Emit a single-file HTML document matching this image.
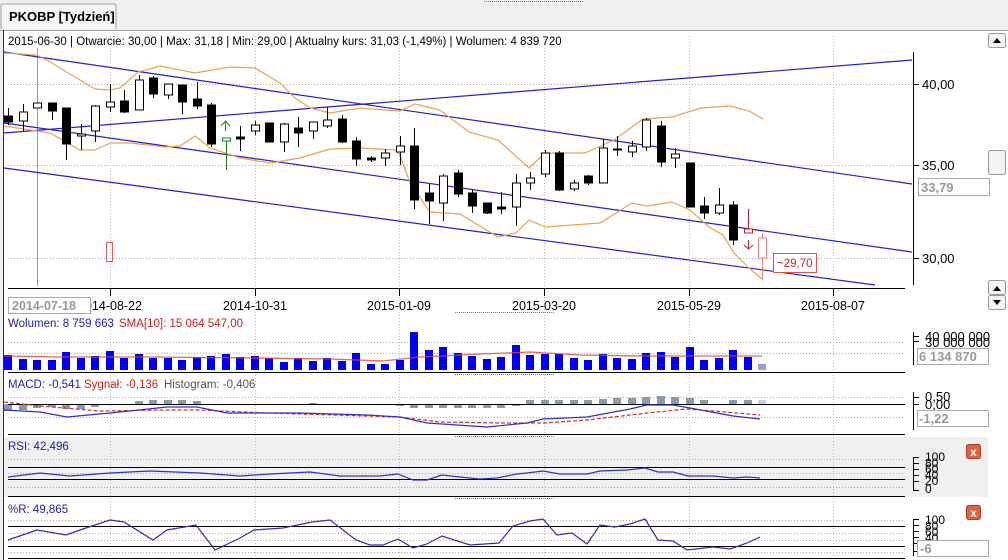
<!DOCTYPE html>
<html><head><meta charset="utf-8">
<style>
html,body{margin:0;padding:0;background:#f0f0f0;width:1008px;height:560px;overflow:hidden;font-family:"Liberation Sans",Tahoma,sans-serif}
svg{display:block}
text{font-family:"Liberation Sans",Tahoma,sans-serif;font-size:11.5px}
</style></head><body>
<svg id="s" width="1008" height="560" xmlns="http://www.w3.org/2000/svg">
<rect x="0" y="0" width="1008" height="560" fill="#f0f0f0"/>
<path d="M1 29 L1 6 Q1 4 3 4 L114 4 Q116 4 116 6 L116 29" fill="#f7f7f7" stroke="#a0a0a0"/>
<text x="9" y="21" font-weight="bold" style="font-size:13px">PKOBP [Tydzień]</text>
<line x1="484" y1="1.5" x2="584" y2="1.5" stroke="#e05050" stroke-dasharray="1,1"/>
<rect x="3" y="30" width="1005" height="530" fill="#fff"/>
<line x1="0" y1="30.5" x2="1008" y2="30.5" stroke="#a0a0a0"/>
<line x1="3.5" y1="30" x2="3.5" y2="560" stroke="#333"/>
<rect x="4" y="437" width="984" height="60" fill="#f0f0f0"/>
<g id="g"></g>
</svg>
<script>
var NS="http://www.w3.org/2000/svg",g=document.getElementById('g');
function el(t,a,txt){var e=document.createElementNS(NS,t);for(var k in a)e.setAttribute(k,a[k]);if(txt!=null)e.textContent=txt;g.appendChild(e);return e;}
function pl(pts,st,w,extra){var a={points:pts.map(function(p){return p.join(',')}).join(' '),fill:'none',stroke:st,'stroke-width':w||1};for(var k in extra)a[k]=extra[k];return el('polyline',a);}
function hd(y,x1,x2){el('line',{x1:x1||8,y1:y+.5,x2:x2||905,y2:y+.5,stroke:'#aaa','stroke-dasharray':'1,2'});}
var vx=[110,255,399,544,689,833];
vx.forEach(function(x){el('line',{x1:x+.5,y1:36,x2:x+.5,y2:558,stroke:'#bbb','stroke-dasharray':'1,2'});});
[84,165,258].forEach(function(y){hd(y,8,912);});
el('text',{x:8,y:45},'2015-06-30 | Otwarcie: 30,00 | Max: 31,18 | Min: 29,00 | Aktualny kurs: 31,03 (-1,49%)  | Wolumen: 4 839 720');
el('line',{x1:37.5,y1:48,x2:37.5,y2:286,stroke:'#999'});
el('line',{x1:4,y1:133,x2:912,y2:60,stroke:'#2020d0','stroke-width':1.2});
el('line',{x1:4,y1:52,x2:912,y2:184,stroke:'#2020d0','stroke-width':1.2});
el('line',{x1:4,y1:123,x2:912,y2:252,stroke:'#2020d0','stroke-width':1.2});
el('line',{x1:4,y1:168,x2:875,y2:285,stroke:'#2020d0','stroke-width':1.2});
var OR='#f0a050';
pl([[4,53],[37,55],[50,62],[80,80],[95,89],[110,90],[120,88],[138,72],[160,66],[195,73],[230,67],[255,68],[280,83],[295,98],[310,108],[330,113],[360,108],[385,110],[400,111],[415,104],[440,110],[469,132],[498,140],[529,168],[545,153],[585,153],[614,140],[643,119],[672,117],[701,108],[730,106],[749,111],[763,119]],OR,1.2);
pl([[4,126],[50,133],[80,150],[95,150],[110,143],[130,143],[165,147],[180,146],[195,136],[210,148],[240,158],[270,163],[300,158],[330,149],[360,148],[395,150],[400,155],[410,183],[430,212],[460,214],[498,237],[516,233],[529,220],[545,227],[600,223],[632,203],[647,206],[672,202],[690,210],[709,227],[723,235],[734,253],[749,268],[762,279]],OR,1.2);
var C=[[116,122,108,125,'b'],[112,121,104,132,'w'],[103,108,103,108,'w'],[103,111,103,120,'b'],[108,144,108,160,'b'],[134,136,124,150,'w'],[106,131,105,142,'w'],[102,107,84,112,'w'],[101,112,90,113,'b'],[80,110,75,110,'w'],[78,94,76,98,'b'],[84,95,84,99,'w'],[85,102,85,114,'b'],[99,106,82,109,'b'],[105,144,103,147,'b'],[138,141,140,170,'g'],[137,139,126,151,'b'],[125,131,121,135,'w'],[123,142,123,142,'b'],[124,142,123,152,'w'],[128,133,117,147,'b'],[122,131,122,139,'w'],[120,126,107,128,'w'],[119,142,115,143,'b'],[141,159,137,166,'b'],[158,160,156,162,'b'],[153,158,149,166,'w'],[146,152,136,165,'w'],[146,200,128,209,'b'],[193,201,184,224,'b'],[176,203,174,221,'w'],[173,194,170,197,'b'],[193,206,190,213,'b'],[203,213,203,214,'b'],[207,209,192,214,'b'],[183,207,174,226,'w'],[178,183,172,190,'w'],[153,174,150,177,'w'],[153,190,151,191,'b'],[183,189,180,191,'w'],[176,183,175,185,'b'],[148,183,139,183,'w'],[149,150,136,156,'b'],[146,152,141,157,'w'],[120,147,118,151,'w'],[126,162,121,167,'b'],[154,158,148,168,'w'],[163,207,163,207,'b'],[206,213,197,219,'b'],[205,213,188,215,'w'],[205,240,201,245,'b'],[229,233,209,233,'r'],[238,258,233,280,'p']];
C.forEach(function(c,i){var x=Math.round(8+i*14.5)+.5;var t=c[4];
 var col=t=='g'?'#208020':t=='r'?'#c02020':t=='p'?'#f08080':'#000';
 el('line',{x1:x,y1:c[2],x2:x,y2:c[3],stroke:col});
 var h=Math.max(c[1]-c[0],1);
 if(t=='b')el('rect',{x:x-4,y:c[0],width:8,height:h,fill:'#000',stroke:'#000'});
 else el('rect',{x:x-4,y:c[0],width:8,height:h,fill:'#fff',stroke:col});
});
el('path',{d:'M225.5 131 V121 M221 126 L225.5 121 L230 126',stroke:'#208020',fill:'none'});
el('path',{d:'M748.5 240 V249 M744 245 L748.5 249 L753 245',stroke:'#c02020',fill:'none'});
el('rect',{x:106.5,y:242.5,width:6,height:19,fill:'none',stroke:'#e06060'});
el('rect',{x:773.5,y:253.5,width:43,height:19,fill:'#fff',stroke:'#e05050'});
el('text',{x:777,y:267,fill:'#d02020'},'~29,70');
el('line',{x1:913.5,y1:52,x2:913.5,y2:285,stroke:'#000'});
[[84,'40,00'],[165,'35,00'],[258,'30,00']].forEach(function(a){el('line',{x1:913,y1:a[0]+.5,x2:919,y2:a[0]+.5,stroke:'#000'});el('text',{x:922,y:a[0]+5,style:'font-size:13px'},a[1]);});
el('rect',{x:918.5,y:178.5,width:71,height:17,fill:'#fff',stroke:'#aaa'});
el('text',{x:921,y:192,fill:'#999','font-weight':'bold',style:'font-size:13px'},'33,79');
el('rect',{x:988.5,y:33.5,width:17,height:14,fill:'#f4f4f4',stroke:'#999',rx:2});
el('path',{d:'M993 43 L997 38 L1001 43Z',fill:'#000'});
el('rect',{x:988.5,y:150.5,width:17,height:24,fill:'#f4f4f4',stroke:'#999',rx:2});
el('rect',{x:988.5,y:280.5,width:17,height:14,fill:'#f4f4f4',stroke:'#999',rx:2});
el('path',{d:'M993 291 L997 286 L1001 291Z',fill:'#000'});
el('rect',{x:988.5,y:295.5,width:17,height:14,fill:'#f4f4f4',stroke:'#999',rx:2});
el('path',{d:'M993 300 L997 305 L1001 300Z',fill:'#000'});
el('line',{x1:8,y1:288.5,x2:905,y2:288.5,stroke:'#000'});
var lab=['2014-08-22','2014-10-31','2015-01-09','2015-03-20','2015-05-29','2015-08-07'];
vx.forEach(function(x,i){el('line',{x1:x+.5,y1:288,x2:x+.5,y2:296,stroke:'#000'});el('text',{x:x,y:310,'text-anchor':'middle',style:'font-size:12.5px'},lab[i]);});
el('rect',{x:8.5,y:297.5,width:82,height:16,fill:'#fff',stroke:'#aaa'});
el('text',{x:12,y:310,fill:'#999','font-weight':'bold',style:'font-size:12.5px'},'2014-07-18');
[312,374,436,498].forEach(function(y){el('line',{x1:455,y1:y+.5,x2:554,y2:y+.5,stroke:'#e05050','stroke-dasharray':'1,1'});});
el('text',{x:8,y:327,fill:'#2020c0'},'Wolumen: 8 759 663');
el('text',{x:119,y:327,fill:'#d02020'},'SMA[10]: 15 064 547,00');
[342,353].forEach(function(y){hd(y);});
var V=[355,359,360,360,352,358,356,351,358,354,358,358,360,357,356,354,357,356,358,362,358,361,358,361,353,364,364,360,332,350,347,353,356,359,357,345,355,354,354,358,360,354,358,359,353,352,357,347,360,358,350,357,364];
V.forEach(function(t,i){var x=Math.round(8+i*14.5)-4;el('rect',{x:x,y:t,width:8,height:370-t,fill:i==52?'#9a9aee':'#0000ee'});});
pl([[4,356],[60,357],[150,357],[250,358],[330,359],[383,361],[420,357],[480,354],[530,352],[580,355],[640,356],[762,356]],'#e04040',1.3,{'stroke-opacity':0.8});
el('line',{x1:8,y1:372.5,x2:905,y2:372.5,stroke:'#000'});
el('line',{x1:913.5,y1:332,x2:913.5,y2:365,stroke:'#000'});
[336,341].forEach(function(y){el('line',{x1:913,y1:y+.5,x2:919,y2:y+.5,stroke:'#000'});});
el('text',{x:925,y:341,style:'font-size:13px'},'40 000 000');
el('text',{x:925,y:347,style:'font-size:13px'},'30 000 000');
el('rect',{x:917.5,y:348.5,width:71,height:16,fill:'#fff',stroke:'#aaa'});
el('text',{x:919,y:361,fill:'#999','font-weight':'bold',style:'font-size:13px'},'6 134 870');
el('text',{x:8,y:388,fill:'#2020c0'},'MACD: -0,541');
el('text',{x:84,y:388,fill:'#d02020'},'Sygnał: -0,136');
el('text',{x:164,y:388,fill:'#555'},'Histogram: -0,406');
hd(417);hd(397);
var H=[7,6,4,3,5,5,3,0,0,-3,-4,-4,-4,-3,0,0,0,0,0,0,0,-1,0,0,0,0,0,2,4,4,4,4,4,4,4,2,-4,-4,-4,-4,-4,-5,-6,-6,-7,-8,-7,-6,-4,0,-4,-4,-4];
H.forEach(function(h,i){if(!h)return;var x=Math.round(8+i*14.5)-4;el('rect',{x:x,y:h>0?404:404+h,width:8,height:Math.abs(h),fill:i==52?'#c8d0d8':'#8a9caa'});});
el('line',{x1:8,y1:404.5,x2:905,y2:404.5,stroke:'#000'});
pl([[4,402],[40,406],[100,411],[167,410],[200,410],[267,413],[400,417],[440,422],[500,423],[543,423],[587,420],[647,413],[687,409],[713,411],[760,415]],'#d03030',1.2,{'stroke-dasharray':'4,2'});
pl([[4,410],[40,412],[67,417],[110,413],[167,407],[197,407],[227,413],[300,413],[367,415],[400,417],[427,423],[487,427],[527,423],[543,419],[587,417],[630,409],[647,405],[673,405],[690,408],[733,416],[760,419]],'#3030d0',1.2);
el('line',{x1:8,y1:434.5,x2:905,y2:434.5,stroke:'#000'});
el('line',{x1:913.5,y1:392,x2:913.5,y2:430,stroke:'#000'});
[397,404].forEach(function(y){el('line',{x1:913,y1:y+.5,x2:919,y2:y+.5,stroke:'#000'});});
el('text',{x:925,y:401,style:'font-size:13px'},'0,50');
el('text',{x:925,y:409,style:'font-size:13px'},'0,00');
el('rect',{x:917.5,y:410.5,width:71,height:16,fill:'#fff',stroke:'#aaa'});
el('text',{x:919,y:423,fill:'#999','font-weight':'bold',style:'font-size:13px'},'-1,22');
el('text',{x:8,y:450,fill:'#2020c0'},'RSI: 42,496');
[459,473,487].forEach(function(y){hd(y);});
el('line',{x1:8,y1:467.5,x2:905,y2:467.5,stroke:'#000'});
el('line',{x1:8,y1:479.5,x2:905,y2:479.5,stroke:'#000'});
pl([[8,477],[40,473],[70,476],[110,473],[150,471],[200,473],[240,476],[270,474],[310,472],[340,476],[380,476],[398,474],[413,480],[427,480],[442,475],[460,477],[480,479],[497,478],[517,474],[527,473],[543,471],[560,474],[587,474],[600,471],[627,470],[645,468],[658,472],[673,472],[688,476],[713,476],[733,478],[747,477],[760,478]],'#3030d0',1.2);
el('line',{x1:8,y1:496.5,x2:905,y2:496.5,stroke:'#000'});
el('line',{x1:913.5,y1:457,x2:913.5,y2:491,stroke:'#000'});
[457,463,469,475,481,490].forEach(function(y){el('line',{x1:913,y1:y+.5,x2:919,y2:y+.5,stroke:'#000'});});
[[461,'100'],[467,'80'],[473,'60'],[479,'40'],[485,'20'],[493,'0']].forEach(function(a){el('text',{x:925,y:a[0],style:'font-size:12px'},a[1]);});
el('rect',{x:966.5,y:444.5,width:14,height:14,fill:'#e06040',stroke:'#b04030',rx:2});
el('text',{x:973.5,y:456,'text-anchor':'middle',fill:'#fff','font-weight':'bold',style:'font-size:12px'},'x');
el('text',{x:8,y:513,fill:'#2020c0'},'%R: 49,865');
[520,533,540,552].forEach(function(y){hd(y);});
el('line',{x1:8,y1:526.5,x2:905,y2:526.5,stroke:'#000'});
el('line',{x1:8,y1:546.5,x2:905,y2:546.5,stroke:'#000'});
pl([[8,540],[37,530],[66,535],[80,530],[110,520],[124,522],[153,540],[167,530],[196,525],[215,550],[240,538],[254,530],[283,528],[312,522],[330,520],[356,540],[370,545],[383,545],[398,539],[413,548],[427,544],[442,536],[470,545],[499,543],[513,526],[530,521],[543,519],[557,535],[572,533],[587,544],[600,525],[615,527],[630,524],[645,519],[658,540],[673,541],[687,550],[713,547],[730,549],[747,543],[760,537]],'#3030b0',1.2);
el('line',{x1:8,y1:558.5,x2:905,y2:558.5,stroke:'#000'});
el('line',{x1:913.5,y1:519,x2:913.5,y2:556,stroke:'#000'});
[519,525,531,537,543,551].forEach(function(y){el('line',{x1:913,y1:y+.5,x2:919,y2:y+.5,stroke:'#000'});});
[[524,'100'],[530,'80'],[536,'60'],[542,'40']].forEach(function(a){el('text',{x:925,y:a[0],style:'font-size:12px'},a[1]);});
el('rect',{x:917.5,y:540.5,width:71,height:16,fill:'#fff',stroke:'#aaa'});
el('text',{x:920,y:553,fill:'#999','font-weight':'bold',style:'font-size:13px'},'-6');
el('rect',{x:966.5,y:505.5,width:14,height:14,fill:'#e06040',stroke:'#b04030',rx:2});
el('text',{x:973.5,y:517,'text-anchor':'middle',fill:'#fff','font-weight':'bold',style:'font-size:12px'},'x');
</script>
</body></html>
